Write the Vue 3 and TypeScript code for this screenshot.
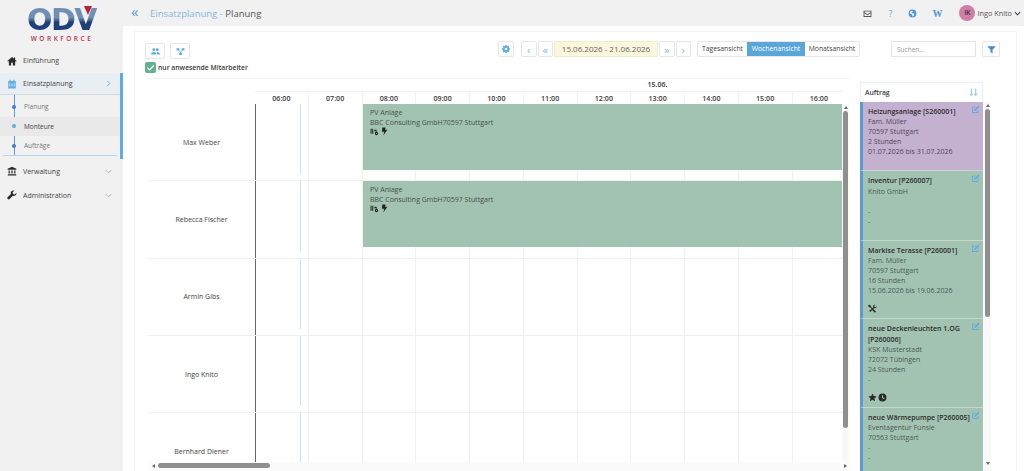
<script setup lang="ts">
const icons: Record<string, string> = {
  home: 'M8 1.5 0.5 8l1 1.1L3 7.8V15h3.6v-4.4h2.8V15H13V7.8l1.5 1.3 1-1.1L13 5.8V2.2h-2v1.9z',
  calendar: 'M2 3h2V1h2v2h4V1h2v2h2v12H2zM3.5 7v1.6h2V7zm3.5 0v1.6h2V7zm3.5 0v1.6h2V7zm-7 3v1.6h2V10zm3.5 0v1.6h2V10zm3.5 0v1.6h2V10z',
  bank: 'M8 1 1 4.5V6h14V4.5zM2.5 7v5h2V7zm4.5 0v5h2V7zm4.5 0v5h2V7zM1.5 13 1 15h14l-.5-2z',
  wrench: 'M15 4.3 12.4 7 9.8 6.2 9 3.6 11.7 1C9.8.4 7.8 1 6.7 2.5 5.9 3.700 5.800 5 6.300 6.200L1.200 11.300a2 2 0 0 0 3 3l5.100-5.100c1.300.5 2.600.4 3.800-.4 1.500-1.100 2.400-2.800 1.900-4.500z',
  users: 'M5 7.500A2.600 2.600 0 1 0 5 2.300a2.600 2.600 0 0 0 0 5.200zm6.200 0a2.600 2.600 0 1 0 0-5.200 2.600 2.600 0 0 0 0 5.200zM0 13.500c0-3 2-4.800 5-4.800s5 1.800 5 4.800zm11 0c0-1.900-.6-3.500-1.800-4.500.6-.2 1.300-.3 2-.3 2.800 0 4.800 1.800 4.800 4.800z',
  sitemap: 'M1 2h5v4H1zm9 0h5v4h-5zM5.500 10h5v4h-5zM5 6l2.500 4h1L11 6H9.800L8 8.800 6.200 6z',
  gear: 'M6.700 0h2.600l.4 2.100 1.300.6 1.800-1.200 1.900 1.900-1.200 1.800.6 1.300 2.100.4v2.600l-2.100.4-.6 1.300 1.200 1.800-1.900 1.900-1.800-1.200-1.300.6-.4 2.100H6.700l-.4-2.100-1.300-.6-1.800 1.200-1.900-1.900 1.200-1.800-.6-1.300L0 9.300V6.700l2.100-.4.6-1.300-1.200-1.800 1.900-1.900L5.200 2.500l1.100-.4zM8 5.500a2.500 2.500 0 1 0 0 5 2.500 2.500 0 0 0 0-5z',
  filter: 'M.5 2h15L9.800 8.500V15l-3.600-2.500v-4z',
  edit: 'M2 3h7L7.500 4.500H3.500v8h8V9L13 7.500V14H2zM13 1l2 2-7 7-2.600.6L6 8z',
  star: 'M8 .8l2.200 4.700 5.100.6-3.800 3.500 1 5.100L8 12.200l-4.500 2.500 1-5.100L.7 6.100l5.100-.6z',
  clock: 'M8 1a7 7 0 1 0 0 14A7 7 0 0 0 8 1zm-.9 2.800h1.800v3.900l2.800 1.800-1 1.500-3.600-2.400z',
  tools: 'M2 1 5 3v1.600l3 3 1.400-1.400-.3-1.700C9.100 2.700 11 .8 13 1.100L11 3.200l.6 1.900 2 .6 2-2c.3 2-1.600 3.900-3.400 3.900l-1.500-.2-1.300 1.300 4.800 4.800-1.900 1.900-4.800-4.800-3.500 3.500-1.900-1.900L6.600 8.700l-3-3H2L0 3z',
  tractor: 'M1 3h1.800v9H1zm3 0h1.800v9H4zM8 5h3l2 3h-1.500a3.500 3.500 0 0 0-3.500 0zm3.500 3.500a3 3 0 1 1 0 6 3 3 0 0 1 0-6zm0 2a1 1 0 1 0 0 2 1 1 0 0 0 0-2z',
  bolt: 'M4 1h6L9 5h4L6 15l1.500-6.500H3.500z',
  mail: 'M1 3h14v11H1zm1.600 1.500v1.200L8 9.200l5.400-3.500V4.500zm0 3v5h10.800v-5L8 11z',
  globe: 'M8 1a7 7 0 1 0 0 14A7 7 0 0 0 8 1zM5 3.500l2.500-.6 1 1.600-1.600 1.500.8 1.500 3 .8.300 2.700-1.700 2.200-1.300-.3-.5-3L4.500 8.500 3 6.800z',
  sort: 'M3 1h2.500v9H8l-3.750 5L.5 10H3zm7.500 0H13v9h2.500l-3.750 5L8 10h2.500z',
};

const hours = ['06:00', '07:00', '08:00', '09:00', '10:00', '11:00', '12:00', '13:00', '14:00', '15:00', '16:00'];

const staff = [
  { name: 'Max Weber', booked: true },
  { name: 'Rebecca Fischer', booked: true },
  { name: 'Armin Gibs', booked: false },
  { name: 'Ingo Knito', booked: false },
  { name: 'Bernhard Diener', booked: false },
];

const subNav = [
  { label: 'Planung', active: false },
  { label: 'Monteure', active: true },
  { label: 'Aufträge', active: false },
];

const orders = [
  { title: 'Heizungsanlage [S260001]', lines: ['Fam. Müller', '70597 Stuttgart', '2 Stunden', '01.07.2026 bis 31.07.2026'], icons: [], tone: 'purple' },
  { title: 'Inventur [P260007]', lines: ['Knito GmbH', '\u00a0', '-', '-'], icons: [], tone: 'green' },
  { title: 'Markise Terasse [P260001]', lines: ['Fam. Müller', '70597 Stuttgart', '16 Stunden', '15.06.2026 bis 19.06.2026'], icons: ['tools'], tone: 'green' },
  { title: 'neue Deckenleuchten 1.OG [P260006]', lines: ['KSK Musterstadt', '72072 Tübingen', '24 Stunden', '-'], icons: ['star', 'clock'], tone: 'green' },
  { title: 'neue Wärmepumpe [P260005]', lines: ['Eventagentur Funsie', '70563 Stuttgart', '-', '-'], icons: [], tone: 'green' },
];
</script>

<template>
  <div class="app">
    <aside class="sidebar">
      <div class="logo">
        <div class="logo-mark">ODV<span class="logo-tip"></span></div>
        <div class="logo-sub">WORKFORCE</div>
      </div>
      <nav class="nav">
        <a class="nav-item first">
          <svg class="nav-icon" viewBox="0 0 16 16"><path :d="icons.home" /></svg>
          <span>Einführung</span>
        </a>
        <div class="nav-group">
          <a class="nav-item nav-open">
            <svg class="nav-icon blue" viewBox="0 0 16 16"><path :d="icons.calendar" /></svg>
            <span>Einsatzplanung</span>
            <svg class="chev" viewBox="0 0 8 8"><path d="M2.500 1 5.500 4 2.500 7" /></svg>
          </a>
          <ul class="sub-nav">
            <li v-for="item in subNav" :key="item.label" :class="{ active: item.active }">
              <i class="dot"></i>{{ item.label }}
            </li>
          </ul>
        </div>
        <a class="nav-item">
          <svg class="nav-icon" viewBox="0 0 16 16"><path :d="icons.bank" /></svg>
          <span>Verwaltung</span>
          <svg class="chev grey" viewBox="0 0 8 8"><path d="M1 2.500 4 5.500 7 2.500" /></svg>
        </a>
        <a class="nav-item">
          <svg class="nav-icon" viewBox="0 0 16 16"><path :d="icons.wrench" /></svg>
          <span>Administration</span>
          <svg class="chev grey" viewBox="0 0 8 8"><path d="M1 2.500 4 5.500 7 2.500" /></svg>
        </a>
      </nav>
    </aside>

    <div class="content">
      <header class="topbar">
        <span class="back">«</span>
        <span class="crumb"><b>Einsatzplanung -</b> Planung</span>
        <div class="top-actions">
          <svg class="top-icon dark" viewBox="0 0 16 16"><path :d="icons.mail" /></svg>
          <span class="help">?</span>
          <svg class="top-icon globe" viewBox="0 0 16 16"><path :d="icons.globe" /></svg>
          <span class="wiki">W</span>
          <span class="user">
            <span class="avatar">IK</span>Ingo Knito
            <svg class="user-chev" viewBox="0 0 8 8"><path d="M1 2.500 4 5.500 7 2.500" /></svg>
          </span>
        </div>
      </header>

      <main class="panel">
        <div class="toolbar">
          <div class="tools-left">
            <div class="tool-row">
              <button class="btn wide"><svg viewBox="0 0 16 16"><path :d="icons.users" /></svg></button>
              <button class="btn wide"><svg viewBox="0 0 16 16"><path :d="icons.sitemap" /></svg></button>
            </div>
            <label class="check">
              <span class="check-box"><svg viewBox="0 0 12 12"><path d="M2.500 6.200 5 8.500 9.500 3.800" /></svg></span>
              nur anwesende Mitarbeiter
            </label>
          </div>
          <div class="tools-right">
            <button class="btn gear"><svg viewBox="0 0 16 16"><path :d="icons.gear" /></svg></button>
            <div class="date-nav">
              <button class="btn step">‹</button>
              <button class="btn step">«</button>
              <span class="date-range">15.06.2026 - 21.06.2026</span>
              <button class="btn step">»</button>
              <button class="btn step">›</button>
            </div>
            <div class="views">
              <span class="view tages">Tagesansicht</span>
              <span class="view woche on">Wochenansicht</span>
              <span class="view monat">Monatsansicht</span>
            </div>
            <input class="search" placeholder="Suchen..." />
            <button class="btn filter"><svg viewBox="0 0 16 16"><path :d="icons.filter" /></svg></button>
          </div>
        </div>

        <div class="board">
          <section class="scheduler">
            <div class="sched-main">
              <div class="names">
                <div v-for="person in staff" :key="person.name" class="name-cell">{{ person.name }}</div>
              </div>
              <div class="timeline">
                <div class="track">
                  <div class="day-head">15.06.</div>
                  <div class="hour-head">
                    <div v-for="hour in hours" :key="hour" class="hour">{{ hour }}</div>
                  </div>
                  <div class="rows">
                    <div v-for="person in staff" :key="person.name" class="row">
                      <div v-for="hour in hours" :key="hour" class="slot"></div>
                      <i class="now"></i>
                      <div v-if="person.booked" class="event">
                        <div>PV Anlage</div>
                        <div>BBC Consulting GmbH70597 Stuttgart</div>
                        <div class="event-icons">
                          <svg viewBox="0 0 16 16"><path :d="icons.tractor" /></svg>
                          <svg viewBox="0 0 16 16"><path :d="icons.bolt" /></svg>
                        </div>
                      </div>
                    </div>
                  </div>
                </div>
              </div>
              <div class="vbar">
                <span class="arrow-up"></span>
                <span class="thumb-v"></span>
              </div>
            </div>
            <div class="hbar">
              <span class="arrow-left"></span>
              <span class="thumb-h"></span>
              <span class="arrow-right"></span>
            </div>
          </section>

          <section class="orders">
            <div class="orders-head">
              <span>Auftrag</span>
              <svg viewBox="0 0 16 16"><path :d="icons.sort" /></svg>
            </div>
            <div class="order-list">
              <article v-for="order in orders" :key="order.title" class="order" :class="order.tone">
                <svg class="order-edit" viewBox="0 0 16 16"><path :d="icons.edit" /></svg>
                <h4>{{ order.title }}</h4>
                <p v-for="(line, i) in order.lines" :key="i">{{ line }}</p>
                <div class="order-icons" :class="{ empty: !order.icons.length }">
                  <svg v-for="name in order.icons" :key="name" viewBox="0 0 16 16"><path :d="icons[name]" /></svg>
                </div>
              </article>
            </div>
          </section>

          <div class="orders-bar">
            <span class="arrow-up"></span>
            <span class="thumb-o"></span>
            <span class="arrow-down"></span>
          </div>
        </div>
      </main>
    </div>
  </div>
</template>

<style>
html,
body {
  margin: 0;
  overflow: hidden;
}
</style>

<style scoped>
.app {
  display: flex;
  width: 1024px;
  height: 471px;
  overflow: hidden;
  background: #f1f1f1;
  color: #555;
  font-family: 'Open Sans', 'Liberation Sans', sans-serif;
  font-size: 7px;
}
svg {
  display: block;
  fill: currentColor;
}

/* sidebar */
.sidebar {
  width: 123px;
  flex: none;
}
.logo {
  height: 48px;
  padding-top: 5px;
  box-sizing: border-box;
  text-align: center;
}
.logo-mark {
  position: relative;
  width: 72px;
  margin: 0 auto;
  font-family: 'DejaVu Sans', sans-serif;
  font-size: 30px;
  font-weight: 700;
  line-height: 30px;
  letter-spacing: -1.500px;
  white-space: nowrap;
  background: linear-gradient(#6f8fb3 0 42%, #1f3f78 58%);
  -webkit-background-clip: text;
  background-clip: text;
  color: transparent;
}
.logo-tip {
  position: absolute;
  top: 1px;
  right: 6px;
  width: 0;
  height: 0;
  border-left: 4px solid transparent;
  border-right: 4px solid transparent;
  border-top: 9px solid #b3223c;
}
.logo-sub {
  padding-left: 1px;
  font-size: 6.500px;
  font-weight: 600;
  letter-spacing: 2.500px;
  line-height: 8px;
  color: #b5314b;
}
.nav {
  display: flex;
  flex-direction: column;
}
.nav-item {
  display: flex;
  align-items: center;
  height: 24px;
  padding: 0 11px 0 7px;
  color: #444;
  font-size: 7px;
}
.nav-item.first {
  height: 25px;
}
.nav-item > span {
  flex: 1;
  margin-left: 6px;
}
.nav-icon {
  width: 10px;
  height: 10px;
  color: #2b2b2b;
}
.nav-icon.blue {
  color: #5dade2;
}
.chev {
  width: 7px;
  height: 7px;
  fill: none;
  stroke: #5dade2;
  stroke-width: 1;
}
.chev.grey {
  stroke: #aaa;
}
.nav-group {
  height: 86px;
  border-right: 3px solid #5dade2;
}
.nav-open {
  height: 22px;
  padding-right: 8px;
  background: #e9eef2;
  border-bottom: 1px solid #d8d8d8;
  box-sizing: border-box;
}
.sub-nav {
  list-style: none;
  margin: 0 0 0 3px;
  padding: 2px 0 0;
  border-bottom: 1px solid #b7d6ee;
  width: 114px;
  height: 58px;
  background: linear-gradient(#5b9bd5, #5b9bd5) 11px 0 / 1px 100% no-repeat;
}
.sub-nav li {
  display: flex;
  align-items: center;
  height: 19.500px;
  margin-left: -3px;
  padding-left: 24px;
  position: relative;
  color: #777;
  font-size: 6.500px;
  width: 120px;
  box-sizing: border-box;
}
.sub-nav li.active {
  background: #e9e9e9;
  color: #444;
}
.dot {
  position: absolute;
  left: 12px;
  width: 4px;
  height: 4px;
  border-radius: 50%;
  background: #3f7fbf;
}
.sub-nav li.active .dot {
  background: #5dade2;
}

/* top bar */
.content {
  flex: 1;
  min-width: 0;
  display: flex;
  flex-direction: column;
}
.topbar {
  display: flex;
  align-items: center;
  height: 26px;
  flex: none;
  padding: 0 3px 0 8px;
  box-sizing: border-box;
}
.back {
  color: #5b9bd5;
  font-size: 15px;
  line-height: 15px;
  margin-top: -3px;
  width: 19px;
}
.crumb {
  font-size: 9.500px;
  color: #555;
}
.crumb b {
  font-weight: 400;
  color: #84b8de;
}
.top-actions {
  display: flex;
  align-items: center;
  margin-left: auto;
}
.top-icon {
  width: 9px;
  height: 9px;
  margin-right: 14px;
  color: #4f9bd4;
}
.top-icon.dark {
  color: #555;
}
.help {
  width: 8px;
  margin-right: 14px;
  color: #5dade2;
  font-size: 9px;
  text-align: center;
}
.wiki {
  width: 11px;
  margin-right: 16px;
  margin-left: 1px;
  color: #4f9bd4;
  font-family: 'Liberation Serif', serif;
  font-size: 10px;
  font-weight: 700;
}
.user {
  display: flex;
  align-items: center;
  font-size: 7.300px;
  color: #555;
}
.avatar {
  width: 16px;
  height: 16px;
  margin-right: 2px;
  border-radius: 50%;
  background: #cf7fa5;
  color: #3f2b36;
  font-size: 6.500px;
  font-weight: 600;
  line-height: 16px;
  text-align: center;
}
.user-chev {
  width: 7px;
  height: 7px;
  margin-left: 2px;
  fill: none;
  stroke: #444;
  stroke-width: 1.300;
}

/* main panel */
.panel {
  flex: 1;
  min-height: 0;
  padding: 5px 7px 0 11px;
  background: #fff;
}
.toolbar {
  display: flex;
  justify-content: space-between;
  height: 47px;
  box-sizing: border-box;
  padding: 9px 16px 0 10px;
  border: 1px solid #f3f3f3;
  border-width: 1px 1px 0;
}
.tool-row {
  display: flex;
  gap: 5px;
  margin-top: 2px;
}
.btn {
  display: flex;
  align-items: center;
  justify-content: center;
  padding: 0;
  height: 16px;
  background: #fff;
  border: 1px solid #e6e6e6;
  border-radius: 2px;
  color: #5dade2;
  font-family: inherit;
  font-size: 11px;
  line-height: 1;
}
.btn svg {
  width: 9px;
  height: 9px;
}
.btn.wide {
  width: 20px;
}
.check {
  display: flex;
  align-items: center;
  margin-top: 3px;
  color: #3a3a3a;
  font-size: 6.800px;
  font-weight: 600;
  white-space: nowrap;
}
.check-box {
  width: 11px;
  height: 11px;
  margin-right: 2px;
  border-radius: 2px;
  background: #5fb391;
}
.check-box svg {
  width: 11px;
  height: 11px;
  fill: none;
  stroke: #fff;
  stroke-width: 1.300;
}
.tools-right {
  display: flex;
  align-items: flex-start;
}
.btn.gear {
  width: 16px;
  margin-right: 7px;
}
.btn.gear svg {
  width: 8px;
  height: 8px;
}
.date-nav {
  display: flex;
  gap: 1px;
  margin-right: 6px;
}
.btn.step {
  width: 15.500px;
  color: #84b8de;
}
.date-range {
  width: 104px;
  height: 16px;
  background: #fcf7dc;
  border: 1px solid #f0ecd0;
  box-sizing: border-box;
  font-size: 8px;
  line-height: 14px;
  text-align: center;
  color: #666;
}
.views {
  display: flex;
  height: 16px;
  margin-right: 31px;
  border: 1px solid #e6e6e6;
  border-radius: 2px;
  box-sizing: border-box;
}
.view {
  font-size: 6.800px;
  line-height: 14px;
  color: #444;
  text-align: center;
  white-space: nowrap;
}
.view.tages {
  width: 49px;
}
.view.woche {
  width: 58px;
}
.view.monat {
  width: 54px;
}
.view.on {
  background: #5aa6d8;
  color: #fff;
}
.search {
  width: 85px;
  height: 16px;
  padding: 0 5px;
  box-sizing: border-box;
  border: 1px solid #e3e3e3;
  font-family: inherit;
  font-size: 6.500px;
  outline: none;
}
.search::placeholder {
  color: #999;
}
.btn.filter {
  width: 18px;
  margin-left: 6px;
  color: #3f8ecb;
}

/* board */
.board {
  display: flex;
  height: 393px;
  padding: 0 26px 0 13px;
  border-left: 1px solid #f3f3f3;
  border-right: 1px solid #f3f3f3;
}
.scheduler {
  width: 701px;
  flex: none;
  display: flex;
  flex-direction: column;
  border-top: 1px solid #edf0f4;
  box-sizing: border-box;
}
.sched-main {
  flex: 1;
  min-height: 0;
  display: flex;
}
.names {
  width: 107px;
  flex: none;
  padding-top: 25px;
}
.name-cell {
  display: flex;
  align-items: center;
  justify-content: center;
  height: 77.300px;
  box-sizing: border-box;
  border-bottom: 1px solid #edf0f4;
  color: #444;
  font-size: 7px;
}
.timeline {
  flex: 1;
  min-width: 0;
  overflow: hidden;
}
.track {
  width: 591px;
}
.day-head {
  height: 12px;
  padding-left: 214px;
  border-bottom: 1px solid #edf0f4;
  color: #333;
  font-size: 7px;
  font-weight: 600;
  line-height: 12px;
  text-align: center;
}
.hour-head {
  display: flex;
  height: 12px;
}
.hour {
  width: 53.750px;
  flex: none;
  box-sizing: border-box;
  border-right: 1px solid #edf0f4;
  color: #3a3a3a;
  font-size: 7.100px;
  font-weight: 600;
  line-height: 12px;
  text-align: center;
}
.rows {
  border-left: 1px solid #666;
}
.row {
  position: relative;
  display: flex;
  height: 77.300px;
  margin-left: -1px;
  border-bottom: 1px solid #edf0f4;
  box-sizing: border-box;
}
.slot {
  width: 53.750px;
  flex: none;
  box-sizing: border-box;
  border-right: 1px solid #edf0f4;
}
.now {
  position: absolute;
  left: 45px;
  top: 0;
  width: 1px;
  height: 70px;
  background: #cfe2f3;
}
.event {
  position: absolute;
  left: 108px;
  top: 0;
  width: 483px;
  height: 66px;
  padding: 4px 7px;
  box-sizing: border-box;
  background: #a2c3b2;
  color: #464f4a;
  font-size: 7px;
  line-height: 9.500px;
}
.event-icons {
  display: flex;
  gap: 1px;
  color: #222;
}
.event-icons svg {
  width: 9px;
  height: 9px;
}
.vbar {
  position: relative;
  width: 7px;
  flex: none;
  margin-top: 25px;
  background: #f8f8f8;
}
.thumb-v {
  position: absolute;
  left: 1px;
  top: 7px;
  width: 5px;
  height: 317px;
  border-radius: 3px;
  background: #8f8f8f;
}
.arrow-up,
.arrow-down,
.arrow-left,
.arrow-right {
  position: absolute;
  width: 0;
  height: 0;
  border: 2px solid transparent;
}
.arrow-up {
  top: 0;
  left: 1.500px;
  border-bottom: 3px solid #666;
}
.arrow-down {
  bottom: 4px;
  left: 1.500px;
  border-top: 3px solid #666;
}
.arrow-left {
  left: 2px;
  top: 2px;
  border-right: 3px solid #666;
}
.arrow-right {
  right: 0;
  top: 2px;
  border-left: 3px solid #666;
}
.hbar {
  position: relative;
  height: 9px;
  flex: none;
  background: #fbfbfb;
}
.thumb-h {
  position: absolute;
  left: 10px;
  top: 1px;
  width: 112px;
  height: 5px;
  border-radius: 3px;
  background: #8f8f8f;
}

/* orders */
.orders {
  width: 123px;
  flex: none;
  margin-left: 11px;
  padding-top: 4px;
  min-height: 0;
  display: flex;
  flex-direction: column;
}
.orders-head {
  display: flex;
  align-items: center;
  justify-content: space-between;
  height: 19px;
  flex: none;
  padding: 0 4px;
  box-sizing: border-box;
  border: 1px solid #eceff3;
  border-bottom: 0;
  color: #3a3a3a;
  font-size: 6.800px;
  font-weight: 600;
}
.orders-head svg {
  width: 9px;
  height: 9px;
  color: #a9cfe8;
}
.order-list {
  flex: 1;
  min-height: 0;
  margin-top: 1px;
  overflow: hidden;
}
.order {
  position: relative;
  padding: 5px 4px 0 5px;
  border-left: 3px solid #5b9bd5;
  border-bottom: 1px solid #c4d9cd;
  font-size: 7px;
  line-height: 10.100px;
  color: #4c5b53;
}
.order.purple {
  background: #c3b1cf;
  color: #52475a;
}
.order.green {
  background: #a2c3b2;
}
.order h4 {
  margin: 0;
  padding-right: 9px;
  font-size: 7px;
  font-weight: 600;
  color: #2b2b2b;
}
.order p {
  margin: 0;
}
.order-edit {
  position: absolute;
  top: 3px;
  right: 3px;
  width: 9px;
  height: 9px;
  color: #5dade2;
}
.order-icons {
  display: flex;
  align-items: flex-end;
  gap: 1px;
  height: 17px;
  padding-bottom: 5px;
  color: #2b2b2b;
}
.order-icons.empty {
  height: 13px;
  padding-bottom: 0;
}
.order-icons svg {
  width: 9px;
  height: 9px;
}
.orders-bar {
  position: relative;
  width: 7px;
  flex: none;
  margin: 24px 0 0 1px;
  background: #f8f8f8;
}
.thumb-o {
  position: absolute;
  left: 1px;
  top: 7px;
  width: 5px;
  height: 208px;
  border-radius: 3px;
  background: #8f8f8f;
}
</style>
